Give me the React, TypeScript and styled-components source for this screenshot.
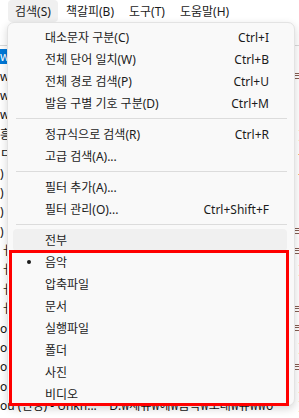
import React from "react";
import styled, { createGlobalStyle } from "styled-components";

const GlobalStyle = createGlobalStyle`
  html, body {
    margin: 0;
    padding: 0;
    background: #ffffff;
  }
  body {
    font-family: "Noto Sans", "Noto Sans CJK KR", sans-serif;
    font-size: 12px;
    color: #1b1b1b;
    overflow: hidden;
  }
`;

interface MenuEntry {
  label: string;
  shortcut?: string;
  separator?: boolean;
  checked?: boolean;
  hover?: boolean;
}

const menuBar = ["검색(S)", "책갈피(B)", "도구(T)", "도움말(H)"];

const entries: MenuEntry[] = [
  { label: "대소문자 구분(C)", shortcut: "Ctrl+I" },
  { label: "전체 단어 일치(W)", shortcut: "Ctrl+B" },
  { label: "전체 경로 검색(P)", shortcut: "Ctrl+U" },
  { label: "발음 구별 기호 구분(D)", shortcut: "Ctrl+M" },
  { label: "", separator: true },
  { label: "정규식으로 검색(R)", shortcut: "Ctrl+R" },
  { label: "고급 검색(A)..." },
  { label: "", separator: true },
  { label: "필터 추가(A)..." },
  { label: "필터 관리(O)...", shortcut: "Ctrl+Shift+F" },
  { label: "", separator: true },
  { label: "전부", hover: true },
  { label: "음악", checked: true },
  { label: "압축파일" },
  { label: "문서" },
  { label: "실행파일" },
  { label: "폴더" },
  { label: "사진" },
  { label: "비디오" },
];

// rows of the result list behind the menu: [left text, right fragment]
const rows: [string, string][] = [
  ["w", ""],
  ["w", "ㅌ"],
  ["w", "l"],
  ["w", "l"],
  ["흥", ")"],
  ["ㅁ", "-"],
  [")", "-"],
  [")", "l"],
  [")", "l"],
  [")", "ㅌ"],
  ["ㅓ", "ㅌ"],
  ["ㅓ", ")"],
  ["ㅓ", "l"],
  ["ㅓ", "ㅌ"],
  ["o", "ㅌ"],
  ["o", ")"],
  ["o", "ㅌ"],
  ["o", ")"],
];

export default function App() {
  return (
    <Page>
      <GlobalStyle />
      <MenuBar>
        {menuBar.map((m, i) => (
          <BarItem key={m} $active={i === 0}>
            {m}
          </BarItem>
        ))}
      </MenuBar>
      <Toolbar>
        <SearchBox />
      </Toolbar>
      <List>
        {rows.map(([l, r], i) => (
          <Row key={i}>
            <Cell $selected={i === 0}>{l}</Cell>
            <Edge>{r}</Edge>
          </Row>
        ))}
        <Row>
          <Cell>ou (인정) - Unkn...&nbsp;&nbsp;&nbsp;&nbsp;D:₩세유₩에₩음악₩노래₩유₩₩o</Cell>
          <Edge>)</Edge>
        </Row>
      </List>

      <Popup>
        {entries.map((e, i) =>
          e.separator ? (
            <Separator key={i} />
          ) : (
            <Item key={i} $hover={e.hover}>
              <Check>{e.checked ? <Dot /> : null}</Check>
              <Label>{e.label}</Label>
              {e.shortcut && <Shortcut>{e.shortcut}</Shortcut>}
            </Item>
          )
        )}
      </Popup>
      <Highlight />
    </Page>
  );
}

const Page = styled.div`
  position: relative;
  width: 299px;
  height: 418px;
  overflow: hidden;
  background: #ffffff;
`;

const MenuBar = styled.div`
  display: flex;
  height: 22px;
  align-items: stretch;
  padding-left: 8px;
  background: #ffffff;
`;

const BarItem = styled.div<{ $active?: boolean }>`
  display: flex;
  align-items: center;
  padding: 0 7px;
  margin-right: 1px;
  border-radius: 4px;
  background: ${(p) => (p.$active ? "#f0f0f0" : "transparent")};
  color: #1b1b1b;
  white-space: nowrap;
`;

const Toolbar = styled.div`
  height: 24px;
  border-bottom: 1px solid #d9d9d9;
  padding: 2px 0 0 0;
  box-sizing: border-box;
`;

const SearchBox = styled.div`
  height: 100%;
  background: #ffffff;
`;

const List = styled.div`
  display: flex;
  flex-direction: column;
  padding-top: 1px;
`;

const Row = styled.div`
  display: flex;
  justify-content: space-between;
  align-items: center;
  height: 19.4px;
  white-space: nowrap;
  color: #111;
`;

const Cell = styled.span<{ $selected?: boolean }>`
  padding: 0 1px 0 0;
  background: ${(p) => (p.$selected ? "#0078d7" : "transparent")};
  color: ${(p) => (p.$selected ? "#ffffff" : "#111")};
  line-height: 15px;
`;

const Edge = styled.span`
  margin-right: -3px;
  color: #6b3a2a;
`;

const Popup = styled.div`
  position: absolute;
  left: 7px;
  top: 22px;
  width: 288px;
  box-sizing: border-box;
  padding: 3px 0 0 0;
  background: #f9f9f9;
  border: 1px solid #e3e3e3;
  border-radius: 7px;
  box-shadow: 0 3px 8px rgba(0, 0, 0, 0.16);
`;

const Item = styled.div<{ $hover?: boolean }>`
  display: flex;
  align-items: center;
  height: 22px;
  margin: 0 7px 0 5px;
  padding-right: 18px;
  border-radius: 4px;
  background: ${(p) => (p.$hover ? "#f0f0f0" : "transparent")};
  white-space: nowrap;
`;

const Check = styled.span`
  display: flex;
  justify-content: center;
  align-items: center;
  width: 32px;
`;

const Dot = styled.span`
  width: 4px;
  height: 4px;
  border-radius: 50%;
  background: #1b1b1b;
`;

const Label = styled.span`
  flex: 1;
`;

const Shortcut = styled.span`
  color: #1b1b1b;
`;

const Separator = styled.div`
  height: 1px;
  margin: 4px 7px 4px 8px;
  background: #dcdcdc;
`;

const Highlight = styled.div`
  position: absolute;
  left: 9px;
  top: 250px;
  width: 280px;
  height: 156px;
  box-sizing: border-box;
  border: 3px solid #ff0000;
`;
